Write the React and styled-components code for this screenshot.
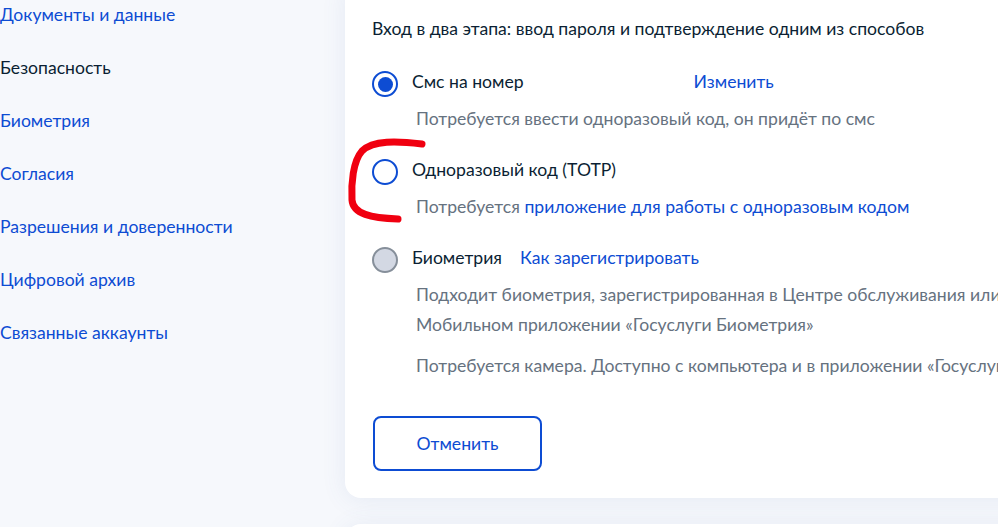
import React from 'react';
import styled, { createGlobalStyle } from 'styled-components';

const GlobalStyle = createGlobalStyle`
  html, body {
    margin: 0;
    padding: 0;
    background: #f6f8fc;
    overflow: hidden;
  }
  body {
    font-family: Lato, "Noto Sans", sans-serif;
    color: #0b1f33;
  }
`;

// страница прокручена на 20px вниз
const Page = styled.div`
  display: grid;
  grid-template-columns: 345px 760px;
  align-items: start;
  margin-top: -20px;
  width: 1200px;
`;

const Nav = styled.nav`
  display: flex;
  flex-direction: column;
  gap: 29px;
  padding-top: 23px;
`;

const NavItem = styled.a`
  font-size: 17.6px;
  line-height: 24px;
  color: ${p => (p.active ? '#0b1f33' : '#0d4cd3')};
  text-decoration: none;
  white-space: nowrap;
`;

const Column = styled.div`
  display: flex;
  flex-direction: column;
  gap: 26px;
`;

const Card = styled.section`
  position: relative;
  background: #fff;
  border-radius: 16px;
  box-shadow: 0 2px 24px rgba(74, 108, 168, 0.1);
  padding: 37px 28px 27px 27px;
  min-height: ${p => p.minH || 0}px;
`;

const Lead = styled.p`
  margin: 0 0 30px;
  font-size: 17.6px;
  line-height: 24px;
`;

const Options = styled.div`
  display: flex;
  flex-direction: column;
  gap: 25px;
`;

const Option = styled.div`
  display: flex;
  flex-direction: column;
`;

const OptionHead = styled.label`
  display: flex;
  align-items: center;
  height: 26px;
  font-size: 17.6px;
`;

const Caption = styled.span`
  padding-bottom: 5px;
  white-space: nowrap;
`;

const Radio = styled.span`
  box-sizing: border-box;
  flex: none;
  width: 26px;
  height: 26px;
  border-radius: 50%;
  margin-right: 14px;
  border: 2px solid ${p => (p.disabled ? '#868f9a' : '#0d4cd3')};
  background: ${p => (p.disabled ? '#d3d8e3' : '#fff')};
  display: flex;
  align-items: center;
  justify-content: center;

  &::after {
    content: '';
    display: ${p => (p.checked ? 'block' : 'none')};
    width: 15px;
    height: 15px;
    border-radius: 50%;
    background: #0d4cd3;
  }
`;

const Link = styled.a`
  color: #0d4cd3;
  text-decoration: none;
  margin-left: ${p => p.offset || 0}px;
`;

const Hint = styled.p`
  margin: 7px 0 0 44px;
  font-size: 17.6px;
  line-height: 30px;
  color: #66727f;
  & + & {
    margin-top: 11px;
  }
`;

const CancelButton = styled.button`
  align-self: flex-start;
  margin-top: 35px;
  width: 169px;
  height: 55px;
  margin-left: 1px;
  border: 2px solid #0d4cd3;
  border-radius: 8px;
  background: #fff;
  color: #0d4cd3;
  font-family: inherit;
  font-size: 17.6px;
  cursor: pointer;
`;

const CardBody = styled.div`
  display: flex;
  flex-direction: column;
`;

const Scribble = styled.svg`
  position: absolute;
  left: 0;
  top: 0;
  pointer-events: none;
`;

const navItems = [
  'Документы и данные',
  'Безопасность',
  'Биометрия',
  'Согласия',
  'Разрешения и доверенности',
  'Цифровой архив',
  'Связанные аккаунты',
];

export default function App() {
  return (
    <>
      <GlobalStyle />
      <Page>
        <Nav>
          {navItems.map(item => (
            <NavItem key={item} href="#" active={item === 'Безопасность'}>
              {item}
            </NavItem>
          ))}
        </Nav>
        <Column>
          <Card>
            <CardBody>
              <Lead>Вход в два этапа: ввод пароля и подтверждение одним из способов</Lead>
              <Options>
                <Option>
                  <OptionHead>
                    <Radio checked />
                    <Caption>
                      Смс на номер
                      <Link href="#" offset={170}>Изменить</Link>
                    </Caption>
                  </OptionHead>
                  <Hint>Потребуется ввести одноразовый код, он придёт по смс</Hint>
                </Option>
                <Option>
                  <OptionHead>
                    <Radio />
                    <Caption>Одноразовый код (TOTP)</Caption>
                  </OptionHead>
                  <Hint>
                    Потребуется <Link href="#">приложение для работы с одноразовым кодом</Link>
                  </Hint>
                </Option>
                <Option>
                  <OptionHead>
                    <Radio disabled />
                    <Caption>
                      Биометрия
                      <Link href="#" offset={18}>Как зарегистрировать</Link>
                    </Caption>
                  </OptionHead>
                  <Hint>
                    Подходит биометрия, зарегистрированная в Центре обслуживания или
                    Мобильном приложении «Госуслуги Биометрия»
                  </Hint>
                  <Hint>Потребуется камера. Доступно с компьютера и в приложении «Госуслуги»</Hint>
                </Option>
              </Options>
              <CancelButton type="button">Отменить</CancelButton>
            </CardBody>
            <Scribble width="100" height="260" viewBox="0 0 100 260">
              <path
                d="M77 164 C52 161, 28 160, 17 171 C8 181, 6 204, 7 220 C8 234, 26 238, 53 239"
                fill="none"
                stroke="#f00010"
                strokeWidth="7"
                strokeLinecap="round"
                strokeLinejoin="round"
              />
            </Scribble>
          </Card>
          <Card minH={200} />
        </Column>
      </Page>
    </>
  );
}
